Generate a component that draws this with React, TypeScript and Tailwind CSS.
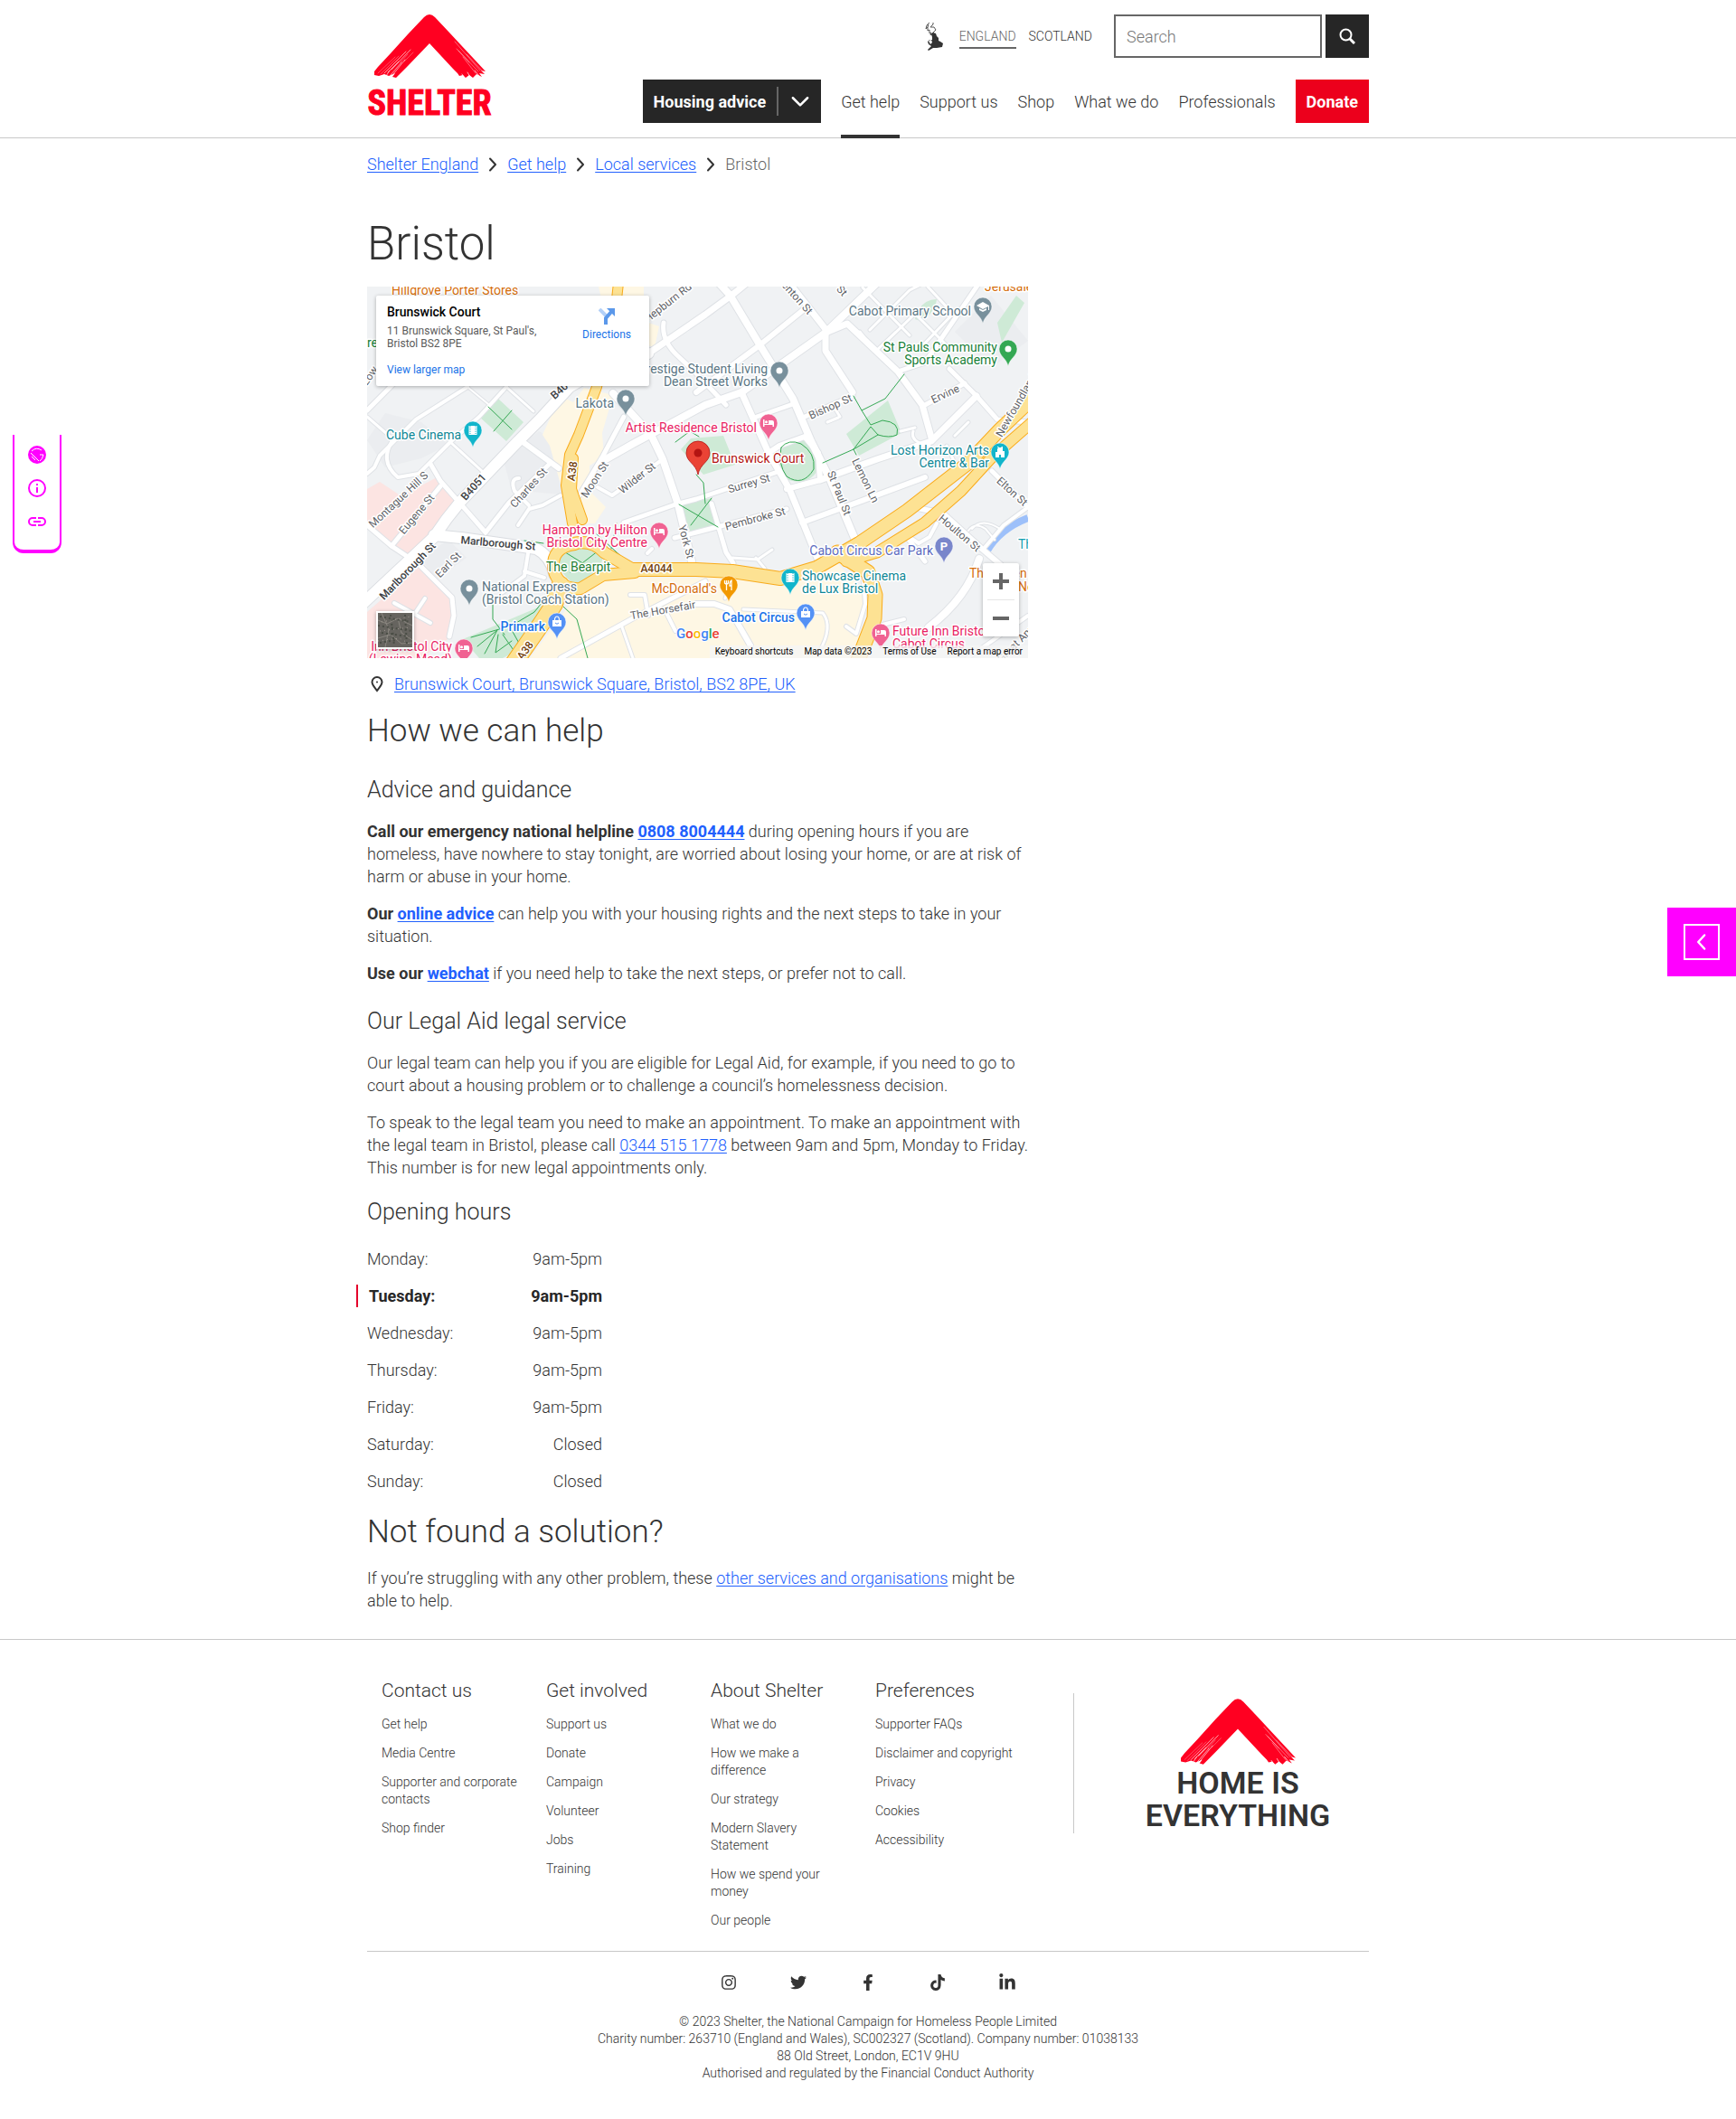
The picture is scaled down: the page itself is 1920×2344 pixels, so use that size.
import type { ReactNode } from "react";
import { FaFacebookF, FaLinkedinIn, FaTiktok, FaTwitter, FaInstagram } from "react-icons/fa";

/* ---------- brand drawings ---------- */

function Roof({ className }: { className: string }) {
  return (
    <svg viewBox="0 0 124 70" className={className} aria-hidden="true">
      <path
        fill="#ff0021"
        d="M56 3 Q62 -3 68 3 L84 20 L97 34 L111 49 L124 63 L119 62 L123 66 L117 65 L120 69 L114 66 L110 70 L106 67 L102 70 L99 67 L95 68 L93 65 L88 60 L62 32 L38 57 L25 70 L21 69 L24 65 L17 68 L12 66 L6 68 L1 67 L1 63 L5 58 L19 43 L38 22 Z"
      />
      <g stroke="#fff" strokeLinecap="round" fill="none">
        <path strokeWidth="0.6" d="M41 39 L20 61 M36 41 L12 65 M31 53 L19 67 M28 52 L16 64 M35 50 L22 66 M18 62 L14 68" />
        <path strokeWidth="0.3" d="M28 46 L8 66 M44 42 L34 52 M38 44 L30 53 M24 47 L5 65" />
        <path strokeWidth="0.4" d="M90 30 L118 62 M94 40 L116 63 M99 47 L113 65 M103 44 L120 62 M92 38 L106 53" />
        <path strokeWidth="0.7" d="M104 64 L107 69 M112 62 L117 68 M98 66 L100 69" />
      </g>
    </svg>
  );
}

function ShelterLogo() {
  return (
    <svg viewBox="0 0 138 120" className="h-[120px] w-[138px] overflow-visible" role="img" aria-label="Shelter">
      <svg x="7" y="0" width="124" height="70" viewBox="0 0 124 70">
        <Roof className="" />
      </svg>
      <text
        x="69"
        y="111"
        textAnchor="middle"
        fill="#ff0021"
        stroke="#ff0021"
        strokeWidth="1"
        fontSize="38"
        fontWeight="700"
        fontFamily="'Roboto Condensed','Liberation Sans Narrow',Roboto,sans-serif"
      >
        SHELTER
      </text>
    </svg>
  );
}

function BritainIcon() {
  return (
    <svg viewBox="0 0 20 32" className="h-8 w-5" aria-hidden="true">
      <path
        d="M5 1 L2 4 L1 8 L3 6 L3 10 L5 9 L5 13 L7 12 L6 15 L9 12 L12 9 L10 6 L6 6 L9 3 L9 1 M4 3 L3 6"
        fill="none"
        stroke="#555"
        strokeWidth="1"
      />
      <path
        fill="#333"
        d="M7 14 L9 12 L12 13 L13 16 L15 18 L15 21 L17 22 L20 24 L19 28 L13 29 L9 29 L4 32 L3 31 L7 27 L4 25 L3 22 L5 20 L8 20 L8 17 Z"
      />
      <path d="M4 21 L7 20 L8 23 L6 25 Z" fill="#fff" />
    </svg>
  );
}

function Chevron({ className, d }: { className: string; d: string }) {
  return (
    <svg viewBox="0 0 16 16" className={className} fill="none" stroke="currentColor" strokeWidth="2" strokeLinecap="round" strokeLinejoin="round" aria-hidden="true">
      <path d={d} />
    </svg>
  );
}

/* ---------- map ---------- */

const minorRoads: [string, number][] = [
  ["M0 264 L27 287 L57 307 L94 344 L96 364 L91 387", 5],
  ["M0 207 L8 200 L14 187 L54 147 L111 111", 4],
  ["M27 172 Q14 194 34 211 L57 207 L77 187 L92 172 L124 144 L154 111", 4],
  ["M92 172 L127 204", 3],
  ["M27 287 L81 221", 5],
  ["M70 196 L81 215 L104 241 L131 272", 5],
  ["M131 272 L157 239 L201 197", 5],
  ["M171 171 L212 201", 6],
  ["M167 264 L179 246 L194 242 L214 231", 4],
  ["M168 212 Q158 212 163 226 L179 242", 4],
  ["M0 137 L84 52", 5],
  ["M111 111 L134 130", 2],
  ["M0 144 L30 170", 3],
  ["M154 111 L184 138", 3],
  ["M234 232 L261 187 L284 144", 5],
  ["M255 222 L271 231 L327 191", 4],
  ["M264 191 L294 174 L374 131 L414 117 L507 51 L564 -4", 8],
  ["M359 304 L344 241 L327 191 L314 164 L272 118", 8],
  ["M389 -4 L401 9 L434 64 L471 124 L491 171 L511 211 L544 290", 8],
  ["M467 -4 L507 47 L507 71 L537 117", 7],
  ["M507 51 L531 41 L587 94 L614 131 L624 167", 7],
  ["M587 94 L617 84 L677 -4", 5],
  ["M364 117 L434 65 L481 27", 6],
  ["M311 74 L374 31 L404 9 L420 -4", 7],
  ["M328 40 Q325 60 345 78 L364 96 L397 131", 5],
  ["M284 261 L341 241 L364 235 L457 204", 5],
  ["M484 144 L537 121", 5],
  ["M431 144 L474 129", 5],
  ["M515 131 L523 144 M509 150 L521 145", 3],
  ["M414 117 L444 184 L467 224 L474 241 L499 303", 7],
  ["M444 184 L456 176 L484 166 L499 184 L501 214 L464 224", 6],
  ["M501 214 L564 191 L624 171 L674 121", 7],
  ["M340 278 L364 272 L464 246", 5],
  ["M481 261 L547 237 L617 211", 6],
  ["M381 240 L397 294 L405 306", 5],
  ["M644 91 L674 121 L697 147 L731 150", 5],
  ["M617 131 L661 107", 5],
  ["M691 204 L731 244", 5],
  ["M604 244 L637 251 L681 291 L701 308", 6],
  ["M681 291 L704 264 L731 244", 4],
  ["M677 301 Q664 344 621 377", 8],
  ["M731 364 L664 411", 4],
  ["M597 277 L617 304", 5],
  ["M630 262 L622 277 L610 284 L598 276", 4],
  ["M665 270 Q672 260 684 268 L694 280 M669 268 Q680 255 700 268", 2],
  ["M548 1 L600 54 M556 48 L600 4 L616 -4 M575 60 L606 30 L640 64 M545 50 L562 72 L585 50 M620 0 L648 30 L610 70", 3],
  ["M606 156 L590 160 M622 176 Q600 172 604 160 M650 165 L665 150 M641 176 L650 195 L665 200", 3],
  ["M214 411 L294 367 L374 326", 5],
  ["M364 351 L384 351 L401 357 L424 397", 6],
  ["M331 361 L341 381", 4],
  ["M281 374 L294 411", 3],
  ["M291 341 L307 341 L311 364", 4],
  ["M404 320 L396 345 M416 357 L504 361 Q516 376 500 404", 3],
  ["M549 324 L551 351 L541 384 L530 376", 4],
  ["M570 374 L594 368 M310 295 L315 290", 4],
  ["M178 295 L174 320 L150 338 M174 315 L196 322", 4],
  ["M54 360 L64 345 M30 350 L70 372", 4],
  ["M404 300 L432 302 L448 291 M430 300 L440 312", 3],
];

const arterials: [string, number][] = [
  ["M-4 350 L74 277 L88 257 L104 237 L167 171 L191 147 L224 111 L260 90 L311 74", 12],
  ["M74 275 L104 278 L160 286 L187 290 Q203 298 207 318", 12],
];

const trunkRoads: [string, number][] = [
  ["M278 -4 L276 14 L254 111 L234 164 L224 186 L220 220 L227 262", 10],
  ["M228 190 L226 224 L238 258", 10],
  ["M230 285 Q204 288 206 312 Q212 336 236 334 L261 319 L296 316", 12],
  ["M228 284 Q250 280 262 294 L296 314", 12],
  ["M214 330 L207 351 L194 371 L160 420", 18],
  ["M288 313 L364 313 L404 315 L457 323 L497 311 L544 284 L597 248 L664 196 L700 158 L740 120", 14],
  ["M530 304 L564 294 L617 261 L657 226 L690 190 L740 146", 11],
  ["M520 294 L554 316 L562 341 L561 367 L542 416", 15],
];

const greenPaths =
  "M134 133 L160 158 M160 137 L140 160 M341 172 L357 160 L367 166 M364 208 L372 217 L374 240 M345 241 L388 266 M381 234 L358 264 M594 97 L573 124 L547 137 L538 121 M547 137 L557 153 L570 148 Q590 150 586 164 Q578 168 565 164 L557 155 L538 180 L504 195 M538 180 L565 164 M538 180 L541 186 M458 178 Q466 168 480 174 Q496 184 494 202 Q482 222 464 210 Q454 196 458 178 M216 292 L245 310 M256 292 L225 316 M174 281 L195 284 M254 274 L285 302 M276 262 L270 290 M139 352 L139 368 L152 385 M115 388 L160 375 L185 360 L193 350 M122 398 L144 380 L130 406 M150 385 L164 405 M160 380 L170 398 M145 385 L142 405 L160 392 M217 354 L232 368 L244 411";

const pinColours = { slate: "#78909c", teal: "#12b5cb", pink: "#f06292", green: "#34a853", blue: "#5491f5", orange: "#f29900", indigo: "#7986cb" };

const pins: { x: number; y: number; c: string; g: "dot" | "bed" | "film" | "bag" | "fork" | "cap" | "castle" | "P" }[] = [
  { x: 286, y: 124, c: pinColours.slate, g: "dot" },
  { x: 117, y: 159, c: pinColours.teal, g: "film" },
  { x: 456, y: 93, c: pinColours.slate, g: "dot" },
  { x: 444, y: 151, c: pinColours.pink, g: "bed" },
  { x: 681, y: 22, c: pinColours.slate, g: "cap" },
  { x: 709, y: 69, c: pinColours.green, g: "dot" },
  { x: 700, y: 183, c: pinColours.teal, g: "castle" },
  { x: 323, y: 271, c: pinColours.pink, g: "bed" },
  { x: 113, y: 334, c: pinColours.slate, g: "dot" },
  { x: 210, y: 371, c: pinColours.blue, g: "bag" },
  { x: 107, y: 400, c: pinColours.pink, g: "bed" },
  { x: 400, y: 330, c: pinColours.orange, g: "fork" },
  { x: 468, y: 322, c: pinColours.teal, g: "film" },
  { x: 485, y: 361, c: pinColours.blue, g: "bag" },
  { x: 638, y: 287, c: pinColours.indigo, g: "P" },
  { x: 568, y: 383, c: pinColours.pink, g: "bed" },
];

function PinGlyph({ kind }: { kind: string }) {
  switch (kind) {
    case "bed":
      return <path fill="#fff" d="M-6 -4 h1.5 v5 h4.5 v-4 h4 q2 0 2 2 v5 h-1.5 v-2 h-9 v2 h-1.5 z M-2.5 -2.8 a1.5 1.5 0 1 1 0 3 a1.5 1.5 0 1 1 0 -3" />;
    case "film":
      return (
        <>
          <rect x="-4.500" y="-5" width="9" height="10" fill="#fff" />
          <path stroke="#12b5cb" strokeWidth="1" strokeDasharray="1 1" d="M-3 -5 V5 M3 -5 V5" />
        </>
      );
    case "bag":
      return (
        <>
          <path fill="#fff" d="M-5 -2 h10 v7 h-10 z" />
          <path fill="none" stroke="#fff" strokeWidth="1.200" d="M-2.500 -2 q0 -4 2.500 -4 q2.500 0 2.500 4" />
          <path fill="none" stroke="#5491f5" strokeWidth="1" d="M-2 1 q2 2.500 4 0" />
        </>
      );
    case "fork":
      return <path fill="none" stroke="#fff" strokeWidth="1.300" d="M-2.500 -1 V6 M-4.500 -5 V-2 q2 2 4 0 V-5 M-2.500 -5 V-1 M3 6 V-5 q-2 1 -2 6 h2" />;
    case "cap":
      return <path fill="#fff" d="M-7 -1 L0 -5 L7 -1 V4 H6 V0 L0 3 Z M-4 2 L0 4 L4 2 V4 L0 6 L-4 4 Z" />;
    case "castle":
      return <path fill="#fff" d="M-5 6 V0 h2 v-4 h1 v-1 h-1 v-1 h1.500 v1 h3 v-1 h1.500 v5 h2 v7 h-4 v-3 h-2 v3 z" />;
    case "P":
      return (
        <text x="0" y="5" textAnchor="middle" fill="#fff" fontSize="13" fontWeight="700">
          P
        </text>
      );
    default:
      return <circle r="3.500" fill="#fff" />;
  }
}

const slate = "#5b7684";
const teal = "#129eaf";
const pink = "#e91e63";
const orange = "#d56e0c";

const placeLabels: [string, number, number, "start" | "end", string, number?][] = [
  ["Hillgrove Porter Stores", 27, 9, "start", orange],
  ["re", 0, 67, "start", "#188038"],
  ["Lakota", 273, 134, "end", slate],
  ["Cube Cinema", 21, 169, "start", "#0d8796"],
  ["Prestige Student Living", 443, 96, "end", slate],
  ["Dean Street Works", 443, 110, "end", slate],
  ["Cabot Primary School", 668, 32, "end", slate],
  ["Jerusalem", 683, 5, "start", orange],
  ["St Pauls Community", 697, 72, "end", "#188038"],
  ["Sports Academy", 697, 86, "end", "#188038"],
  ["Artist Residence Bristol", 431, 161, "end", pink],
  ["Brunswick Court", 381, 195, "start", "#b31412"],
  ["Lost Horizon Arts", 688, 186, "end", "#0d8796"],
  ["Centre & Bar", 688, 200, "end", "#0d8796"],
  ["Hampton by Hilton", 310, 274, "end", pink],
  ["Bristol City Centre", 310, 288, "end", pink],
  ["The Bearpit", 198, 315, "start", "#1e7e34"],
  ["National Express", 127, 337, "start", slate],
  ["(Bristol Coach Station)", 127, 351, "start", slate],
  ["Primark", 197, 381, "end", "#1a73e8", 500],
  ["Inn Bristol City", 94, 403, "end", pink],
  ["(Lewins Mead)", 94, 417, "end", pink],
  ["McDonald's", 387, 339, "end", orange],
  ["Showcase Cinema", 481, 325, "start", "#0d8796"],
  ["de Lux Bristol", 481, 339, "start", "#0d8796"],
  ["Cabot Circus", 473, 371, "end", "#1a73e8", 500],
  ["Cabot Circus Car Park", 626, 297, "end", "#5c6bc0"],
  ["Future Inn Bristol", 581, 386, "start", pink],
  ["Cabot Circus", 581, 400, "start", pink],
  ["The", 720, 290, "start", teal],
  ["The Green", 666, 322, "start", orange],
  ["New", 720, 337, "start", orange],
];

const streetLabels: [string, number, number, number, string?, number?][] = [
  ["Montague Hill S", 34, 235, -43],
  ["Eugene St", 54, 251, -50],
  ["Marlborough St", 44, 314, -46, "#3c4043", 500],
  ["Earl St", 89, 307, -45],
  ["Marlborough St", 145, 283, 5, "#3c4043", 500],
  ["B4051", 117, 221, -48, "#3c4043", 500],
  ["B4051", 217, 110, -42, "#3c4043", 500],
  ["Charles St", 178, 222, -48],
  ["A38", 226, 204, -82, "#73400a", 500],
  ["A38", 174, 402, -54, "#73400a", 500],
  ["A4044", 320, 311, 0, "#73400a", 500],
  ["Moon St", 251, 213, -57],
  ["Wilder St", 298, 211, -38],
  ["York St", 354, 282, 75],
  ["The Horsefair", 327, 357, -10],
  ["Surrey St", 422, 217, -16],
  ["Bishop St", 512, 132, -24],
  ["Lemon Ln", 552, 214, 64],
  ["St Paul St", 523, 228, 68],
  ["Ervine", 639, 118, -25],
  ["Newfoundland", 717, 131, -60],
  ["Elton St", 714, 226, 42],
  ["Pembroke St", 429, 256, -15],
  ["Houlton St", 656, 272, 40],
  ["Great Ann St", 722, 389, -45],
  ["Denton St", 474, 9, 48],
  ["St", 526, 4, 48],
  ["Hepburn Rd", 332, 17, -38],
  ["Low", 2, 98, -55],
];

function MapDrawing() {
  return (
    <svg viewBox="0 0 731 411" preserveAspectRatio="xMidYMid slice" className="block h-auto w-full" fontFamily="Roboto, sans-serif" role="img" aria-label="Map of Brunswick Court, Bristol">
      <rect width="731" height="411" fill="#f0f2f4" />
      <g fill="#e8eaed">
        <path d="M150 190 L190 160 L240 190 L215 230 L160 225 Z M0 170 L20 140 L60 150 L90 175 L60 190 L20 200 Z M650 50 L690 10 L731 60 L690 90 Z M60 300 L90 280 L110 300 L75 325 Z" opacity="0.6" />
      </g>
      <path fill="#fce4e2" d="M0 224 L14 216 L38 232 L77 211 L101 240 L80 275 L45 296 L27 287 L0 264 Z M0 360 L60 308 L96 344 L92 388 L60 411 L0 411 Z" />
      <path fill="#fef7e4" d="M256 0 H306 V28 L264 34 Z M311 40 L323 44 L318 67 L310 65 Z M209 131 L216 122 L228 128 L240 112 L272 120 L260 162 L262 188 L246 198 L246 226 L264 244 L252 262 L226 262 L202 176 L194 164 Z M224 352 L262 326 L300 322 H400 L460 332 L520 306 L552 340 L541 411 H180 Z" />
      <path fill="#ceead6" d="M124 144 L145 124 L173 150 L154 171 Z M347 180 L358 168 L394 165 L407 197 L372 208 Z M345 241 L381 234 L389 266 L358 272 Z M458 182 Q466 168 484 170 Q502 182 498 204 Q488 220 466 214 Q452 202 458 182 Z M530 163 L576 126 L591 162 L544 187 Z M606 36 Q612 14 630 14 Q628 30 612 38 Z M697 40 L718 10 L727 18 L702 62 Z M214 292 Q240 284 260 296 Q264 312 232 330 Q208 318 214 292 Z M106 390 L196 352 L164 404 L150 411 H124 Z" />
      <path d="M686 292 Q700 268 731 256" stroke="#9dc0fa" strokeWidth="8" fill="none" />
      <g fill="none" strokeLinejoin="round" strokeLinecap="round">
        {minorRoads.map(([d, w]) => (
          <path key={d} d={d} stroke="#dfe2e6" strokeWidth={w + 2} />
        ))}
        {arterials.map(([d, w]) => (
          <path key={d} d={d} stroke="#dadde1" strokeWidth={w + 2} />
        ))}
        {minorRoads.map(([d, w]) => (
          <path key={d} d={d} stroke="#fff" strokeWidth={w} />
        ))}
        {arterials.map(([d, w]) => (
          <path key={d} d={d} stroke="#fff" strokeWidth={w} />
        ))}
        <path d={greenPaths} stroke="#34a853" strokeWidth="1" />
        {trunkRoads.map(([d, w]) => (
          <path key={d} d={d} stroke="#f9ab1a" strokeWidth={w + 2} />
        ))}
        {trunkRoads.map(([d, w]) => (
          <path key={d} d={d} stroke="#fde293" strokeWidth={w} />
        ))}
      </g>
      <g fontSize="12" stroke="#fff" strokeWidth="3" strokeLinejoin="round" paintOrder="stroke" textAnchor="middle">
        {streetLabels.map(([t, x, y, r, c, w]) => (
          <text key={t + x} transform={`translate(${x} ${y}) rotate(${r})`} y="5" fill={c ?? "#5f6368"} fontWeight={w ?? 400}>
            {t}
          </text>
        ))}
      </g>
      {pins.map((p) => (
        <g key={`${p.x}-${p.y}`} transform={`translate(${p.x} ${p.y})`}>
          <path d="M0 19 C-2 10 -10 8 -10 0 A10 10 0 0 1 10 0 C10 8 2 10 0 19 Z" fill={p.c} stroke="#fff" strokeWidth="0.500" />
          <PinGlyph kind={p.g} />
        </g>
      ))}
      <g transform="translate(366 184)">
        <path d="M0 24 C-2 12 -13 10 -13 0 A13 13 0 0 1 13 0 C13 10 2 12 0 24 Z" fill="#ea4335" stroke="#b31412" strokeWidth="0.800" />
        <circle r="4.500" fill="#b31412" />
      </g>
      <g fontSize="14" stroke="#fff" strokeWidth="3" strokeLinejoin="round" paintOrder="stroke">
        {placeLabels.map(([t, x, y, a, c, w]) => (
          <text key={t + x + y} x={x} y={y} textAnchor={a} fill={c} fontWeight={w ?? 400}>
            {t}
          </text>
        ))}
      </g>
      <text x="342" y="389" fontSize="15" fontWeight="500" stroke="#fff" strokeWidth="2" paintOrder="stroke">
        <tspan fill="#4285f4">G</tspan>
        <tspan fill="#ea4335">o</tspan>
        <tspan fill="#fbbc04">o</tspan>
        <tspan fill="#4285f4">g</tspan>
        <tspan fill="#34a853">l</tspan>
        <tspan fill="#ea4335">e</tspan>
      </text>
    </svg>
  );
}

function SatelliteThumb() {
  return (
    <svg viewBox="0 0 38 38" className="block h-full w-full" aria-hidden="true">
      <rect width="38" height="38" fill="#66645f" />
      <path stroke="#8b8780" strokeWidth="1" fill="none" d="M0 8 L10 12 L22 6 L38 14 M4 0 L12 18 L8 38 M22 6 L26 22 L38 30 M0 28 L14 24 L26 34 L38 33" />
      <path stroke="#4a4d45" strokeWidth="2" fill="none" strokeDasharray="2 3" d="M2 4 L36 10 M0 14 L38 20 M4 22 L34 26 M2 33 L20 30 M14 2 L18 36 M30 2 L32 36" />
      <path stroke="#a39d94" strokeWidth="1" fill="none" strokeDasharray="1 4" d="M4 10 L36 4 M2 20 L36 16 M0 31 L24 28 L38 36" />
    </svg>
  );
}

function LocationMap() {
  return (
    <div className="relative mt-[18px] max-w-[731px] overflow-hidden font-[Roboto,sans-serif] font-normal">
      <MapDrawing />
      <div className="absolute left-2.5 top-2.5 flex h-[100px] w-[302px] justify-between rounded-[2px] bg-white pl-3 pr-5 shadow-[0_1px_4px_rgba(0,0,0,0.3)]">
        <div className="pt-2.5">
          <div className="text-[14px] font-medium leading-4 text-black">Brunswick Court</div>
          <p className="mt-1.5 w-[180px] text-[12px] leading-[14px] text-[#5b5b5b]">11 Brunswick Square, St Paul's, Bristol BS2 8PE</p>
          <a href="#map" className="mt-[15px] block text-[12px] leading-[14px] text-[#1a73e8]">View larger map</a>
        </div>
        <a href="#directions" className="flex flex-col items-center pt-3.5 text-[12px] leading-[14px] text-[#1a73e8]">
          <svg viewBox="0 0 18 18" className="mb-1 h-[18px] w-[18px]" aria-hidden="true">
            <path d="M1 1 L9 9" stroke="#b3d0f7" strokeWidth="4" />
            <path d="M8 18 V11 L14 4" fill="none" stroke="#5b98ea" strokeWidth="4" />
            <path d="M9 0 H18 V9 Z" fill="#5b98ea" />
          </svg>
          Directions
        </a>
      </div>
      <button type="button" aria-label="Show satellite imagery" className="absolute bottom-2.5 left-2.5 h-[42px] w-[42px] bg-white p-0.5 shadow-[0_1px_4px_rgba(0,0,0,0.3)]">
        <SatelliteThumb />
      </button>
      <div className="absolute bottom-6 right-2.5 flex w-10 flex-col items-center rounded-[2px] bg-white shadow-[0_1px_4px_rgba(0,0,0,0.3)]">
        <button type="button" aria-label="Zoom in" className="flex h-10 w-10 items-center justify-center">
          <svg viewBox="0 0 18 18" className="h-[18px] w-[18px]" fill="#666"><path d="M7 0 H11 V7 H18 V11 H11 V18 H7 V11 H0 V7 H7 Z" /></svg>
        </button>
        <span className="h-px w-[30px] bg-[#e6e6e6]" />
        <button type="button" aria-label="Zoom out" className="flex h-10 w-10 items-center justify-center">
          <svg viewBox="0 0 18 18" className="h-[18px] w-[18px]" fill="#666"><path d="M0 7 H18 V11 H0 Z" /></svg>
        </button>
      </div>
      <div className="absolute bottom-0 right-0 flex gap-3 bg-[#f5f5f5]/80 pl-1.5 pr-1.5 text-[10px] leading-[14px] text-black">
        <button type="button">Keyboard shortcuts</button>
        <span>Map data ©2023</span>
        <a href="#terms">Terms of Use</a>
        <a href="#report">Report a map error</a>
      </div>
    </div>
  );
}

/* ---------- page parts ---------- */

function TextLink({ children }: { children: ReactNode }) {
  return (
    <a href="#link" className="text-[#2160fd] underline underline-offset-2">
      {children}
    </a>
  );
}

const navItems = ["Get help", "Support us", "Shop", "What we do", "Professionals"];

function Header() {
  return (
    <header className="border-b border-[#c8c8c8]">
      <div className="mx-auto flex max-w-[1140px] items-start justify-between px-4">
        <a href="#home" className="pt-4">
          <ShelterLogo />
        </a>
        <div className="flex flex-col items-end gap-6 pt-4">
          <div className="flex items-center">
            <BritainIcon />
            <nav aria-label="Nation" className="ml-[18px] mr-6 flex gap-3.5 text-[14px] font-light leading-5">
              <a href="#england" className="border-b-2 border-[#666] pb-0.5 pt-1 text-[#666]">ENGLAND</a>
              <a href="#scotland" className="pb-1 pt-1">SCOTLAND</a>
            </nav>
            <form className="flex gap-1" onSubmit={(e) => e.preventDefault()}>
              <input type="search" aria-label="Search" placeholder="Search" className="h-12 w-[230px] border-2 border-[#666] px-3 text-[18px] font-light outline-none placeholder:text-[#767676]" />
              <button type="submit" aria-label="Submit search" className="flex h-12 w-12 items-center justify-center bg-[#262626] text-white">
                <svg viewBox="0 0 18 18" className="h-[18px] w-[18px]" fill="none" stroke="currentColor" strokeWidth="2">
                  <circle cx="7.500" cy="7.500" r="6" />
                  <path d="M12 12 L17 17" strokeWidth="3" />
                </svg>
              </button>
            </form>
          </div>
          <nav aria-label="Main" className="-mb-px flex items-start gap-[22px] text-[18px]">
            <button type="button" className="flex h-12 items-center bg-[#262626] pl-3 font-bold text-white">
              <span className="pr-3">Housing advice</span>
              <span className="flex h-8 w-[49px] items-center justify-center border-l-2 border-[#666]">
                <Chevron className="h-5 w-5" d="M1.500 5 L8 11.500 L14.500 5" />
              </span>
            </button>
            {navItems.map((item) => (
              <a key={item} href="#nav" className={item === "Get help" ? "h-[65px] border-b-4 border-[#333] pt-3 font-light leading-[26px]" : "h-[65px] pt-3 font-light leading-[26px]"}>
                {item}
              </a>
            ))}
            <a href="#donate" className="flex h-12 items-center bg-[#ec001c] px-3 font-bold text-white">Donate</a>
          </nav>
        </div>
      </div>
    </header>
  );
}

function Breadcrumb() {
  return (
    <nav aria-label="Breadcrumb" className="flex items-center gap-2 pt-4 leading-[26px]">
      {["Shelter England", "Get help", "Local services"].map((c) => (
        <span key={c} className="flex items-center gap-2">
          <TextLink>{c}</TextLink>
          <Chevron className="h-4 w-4" d="M5 1.500 L11 8 L5 14.500" />
        </span>
      ))}
      <span className="text-[#666]">Bristol</span>
    </nav>
  );
}

const hours = [
  ["Monday:", "9am-5pm"],
  ["Tuesday:", "9am-5pm"],
  ["Wednesday:", "9am-5pm"],
  ["Thursday:", "9am-5pm"],
  ["Friday:", "9am-5pm"],
  ["Saturday:", "Closed"],
  ["Sunday:", "Closed"],
];

function OpeningHours() {
  return (
    <table className="-ml-3 mt-3.5 w-[272px]">
      <tbody>
        {hours.map(([day, time]) => {
          const today = day === "Tuesday:";
          return (
            <tr key={day} className={today ? "font-bold text-[#272727]" : ""}>
              <th scope="row" className={today ? "py-2 text-left font-bold" : "py-2 text-left font-light"}>
                <span className={today ? "block border-l-2 border-[#e4002b] pl-3" : "block pl-3"}>{day}</span>
              </th>
              <td className="py-2 text-right">{time}</td>
            </tr>
          );
        })}
      </tbody>
    </table>
  );
}

const footerColumns = [
  { title: "Contact us", links: ["Get help", "Media Centre", "Supporter and corporate contacts", "Shop finder"] },
  { title: "Get involved", links: ["Support us", "Donate", "Campaign", "Volunteer", "Jobs", "Training"] },
  { title: "About Shelter", links: ["What we do", "How we make a difference", "Our strategy", "Modern Slavery Statement", "How we spend your money", "Our people"] },
  { title: "Preferences", links: ["Supporter FAQs", "Disclaimer and copyright", "Privacy", "Cookies", "Accessibility"] },
];

const socials = [
  { name: "Instagram", icon: <FaInstagram size={18} /> },
  { name: "Twitter", icon: <FaTwitter size={18} /> },
  { name: "Facebook", icon: <FaFacebookF size={18} /> },
  { name: "TikTok", icon: <FaTiktok size={18} /> },
  { name: "LinkedIn", icon: <FaLinkedinIn size={20} /> },
];

function Footer() {
  return (
    <footer className="mt-[30px] border-t border-[#c8c8c8]">
      <div className="mx-auto max-w-[1140px] px-4">
        <div className="flex border-b border-[#c8c8c8] pb-6 pt-10">
          <div className="flex flex-1 pl-4">
            {footerColumns.map((col) => (
              <div key={col.title} className="w-[182px] pr-6 last:pr-0">
                <h2 className="text-[21px] leading-8">{col.title}</h2>
                <ul className="mt-3 flex flex-col gap-[13px] text-[14px] leading-[19px]">
                  {col.links.map((l) => (
                    <li key={l}>
                      <a href="#footer">{l}</a>
                    </li>
                  ))}
                </ul>
              </div>
            ))}
          </div>
          <div className="mt-[19px] flex h-[155px] w-[327px] flex-col items-center border-l border-[#c8c8c8] pl-9 pt-1.5">
            <Roof className="h-[73px] w-[128px]" />
            <p className="mt-0.5 text-center text-[34px] font-semibold leading-9 text-[#333]">
              HOME IS
              <br />
              EVERYTHING
            </p>
          </div>
        </div>
        <ul className="flex justify-center gap-[57px] pt-6 leading-5">
          {socials.map((s) => (
            <li key={s.name}>
              <a href="#social" aria-label={s.name} className="flex h-5 w-5 items-center justify-center">
                {s.icon}
              </a>
            </li>
          ))}
        </ul>
        <div className="pb-9 pt-6 text-center text-[14px] leading-[19px]">
          <p>© 2023 Shelter, the National Campaign for Homeless People Limited</p>
          <p>Charity number: 263710 (England and Wales), SC002327 (Scotland). Company number: 01038133</p>
          <p>88 Old Street, London, EC1V 9HU</p>
          <p>Authorised and regulated by the Financial Conduct Authority</p>
        </div>
      </div>
    </footer>
  );
}

function SideTools() {
  return (
    <div className="absolute left-3.5 top-[481px] flex w-[54px] flex-col items-center gap-[17px] rounded-b-xl border-x-2 border-b-4 border-[#ff00ff] bg-white pb-[21px] pt-3 text-[#ff00ff]">
      <button type="button" aria-label="Framework" className="h-5 w-5">
        <svg viewBox="0 0 20 20"><circle cx="10" cy="10" r="10" fill="currentColor" /><path d="M3 8 L12 17 M4 12 L8 16 M4 6 Q9 1 15 5 M17 10 H13 M17 10 Q16 15 13 17" fill="none" stroke="#fff" strokeWidth="1" /></svg>
      </button>
      <button type="button" aria-label="Information" className="h-5 w-5">
        <svg viewBox="0 0 20 20" fill="none" stroke="currentColor" strokeWidth="2"><circle cx="10" cy="10" r="9" /><path d="M10 9 V15 M10 5 V7" /></svg>
      </button>
      <button type="button" aria-label="Copy link" className="h-5 w-5">
        <svg viewBox="0 0 20 20" fill="none" stroke="currentColor" strokeWidth="2"><path d="M9 6 H5 a4 4 0 0 0 0 8 H9 M11 6 H15 a4 4 0 0 1 0 8 H11 M6 10 H14" /></svg>
      </button>
    </div>
  );
}

export default function App() {
  return (
    <div className="relative bg-white font-[Roboto,sans-serif] text-[18px] font-light leading-[25px] text-[#333]">
      <Header />
      <main className="mx-auto max-w-[1140px] px-4">
        <Breadcrumb />
        <div className="max-w-[738px]">
          <h1 className="mt-[46px] text-[51px] leading-[58px]">Bristol</h1>
          <LocationMap />
          <p className="mt-4 flex items-center gap-3">
            <svg viewBox="0 0 14 18" className="ml-1 h-[18px] w-3.5" fill="none" stroke="#333" strokeWidth="2" aria-hidden="true">
              <path d="M7 16 C4 12 1.500 9.500 1.500 6.500 A5.500 5.500 0 0 1 12.500 6.500 C12.500 9.500 10 12 7 16 Z" />
              <circle cx="7" cy="6.500" r="1" fill="#333" stroke="none" />
            </svg>
            <TextLink>Brunswick Court, Brunswick Square, Bristol, BS2 8PE, UK</TextLink>
          </p>
          <h2 className="mt-4 text-[35px] leading-[48px]">How we can help</h2>
          <h3 className="mt-6 text-[25px] leading-[34px]">Advice and guidance</h3>
          <div className="mt-4 flex flex-col gap-4">
            <p>
              <strong className="font-bold">Call our emergency national helpline <TextLink>0808 8004444</TextLink></strong> during opening hours if you are homeless, have nowhere to stay tonight, are worried about losing your home, or are at risk of harm or abuse in your home.
            </p>
            <p>
              <strong className="font-bold">Our <TextLink>online advice</TextLink></strong> can help you with your housing rights and the next steps to take in your situation.
            </p>
            <p>
              <strong className="font-bold">Use our <TextLink>webchat</TextLink></strong> if you need help to take the next steps, or prefer not to call.
            </p>
          </div>
          <h3 className="mt-6 text-[25px] leading-[34px]">Our Legal Aid legal service</h3>
          <div className="mt-4 flex flex-col gap-4">
            <p>Our legal team can help you if you are eligible for Legal Aid, for example, if you need to go to court about a housing problem or to challenge a council’s homelessness decision.</p>
            <p>
              To speak to the legal team you need to make an appointment. To make an appointment with the legal team in Bristol, please call <TextLink>0344 515 1778</TextLink> between 9am and 5pm, Monday to Friday. This number is for new legal appointments only.
            </p>
          </div>
          <h3 className="mt-5 text-[25px] leading-[34px]">Opening hours</h3>
          <OpeningHours />
          <h2 className="mt-3 text-[35px] leading-[48px]">Not found a solution?</h2>
          <p className="mt-3.5">
            If you’re struggling with any other problem, these <TextLink>other services and organisations</TextLink> might be able to help.
          </p>
        </div>
      </main>
      <Footer />
      <SideTools />
      <div className="absolute right-0 top-[1004px] flex h-[76px] w-[76px] items-center justify-center bg-[#ff00ff]">
        <button type="button" aria-label="Open panel" className="flex h-10 w-10 items-center justify-center border-2 border-white text-white">
          <Chevron className="h-5 w-5" d="M10.500 2 L5 8 L10.500 14" />
        </button>
      </div>
    </div>
  );
}
